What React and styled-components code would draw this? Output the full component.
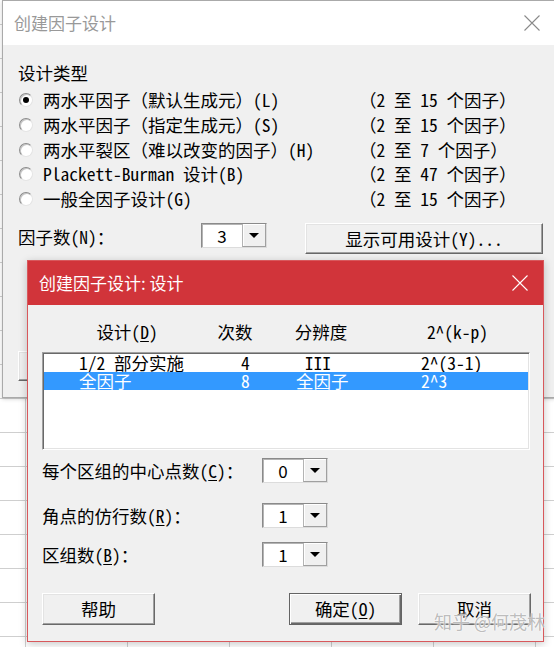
import React from "react";
import styled, { createGlobalStyle, css } from "styled-components";

const BODY_FONT = `"Noto Sans Mono CJK SC", "Noto Sans CJK SC", "DejaVu Sans Mono", monospace`;
const UI_FONT = `"Noto Sans CJK SC", "Noto Sans", sans-serif`;

const designTypes = [
  { label: "两水平因子（默认生成元）(L)", range: "（2 至 15 个因子）", checked: true },
  { label: "两水平因子（指定生成元）(S)", range: "（2 至 15 个因子）" },
  { label: "两水平裂区（难以改变的因子）(H)", range: "（2 至 7 个因子）" },
  { label: "Plackett-Burman 设计(B)", range: "（2 至 47 个因子）" },
  { label: "一般全因子设计(G)", range: "（2 至 15 个因子）" },
];

const designs = [
  { name: "1/2 部分实施", runs: "4", res: " III", exp: "2^(3-1)" },
  { name: "全因子", runs: "8", res: "全因子", exp: "2^3", selected: true },
];

const SHEET_COLS = 7;
const SHEET_ROWS = 19;

function CloseIcon({ color }) {
  return (
    <svg width="16" height="16" viewBox="0 0 16 16">
      <path d="M0.5 0.5 L15.5 15.5 M15.5 0.5 L0.5 15.5" stroke={color} strokeWidth="1.1" fill="none" />
    </svg>
  );
}

function Combo({ value }) {
  return (
    <ComboBox>
      <ComboValue>{value}</ComboValue>
      <ComboArrow>
        <Triangle />
      </ComboArrow>
    </ComboBox>
  );
}

function Hotkey({ children }) {
  return <Key>{children}</Key>;
}

export default function App() {
  return (
    <>
      <GlobalStyle />
      <Desktop>
        <Worksheet>
          {Array.from({ length: SHEET_COLS * SHEET_ROWS }).map((_, i) => (
            <SheetCell key={i} />
          ))}
        </Worksheet>

        <MainWindow>
          <TitleBar>
            <Title>创建因子设计</Title>
            <CloseButton>
              <CloseIcon color="#8a8a8a" />
            </CloseButton>
          </TitleBar>
          <MainBody>
            <SectionLabel>设计类型</SectionLabel>
            <RadioList>
              {designTypes.map((t) => (
                <RadioRow key={t.label}>
                  <RadioCircle $checked={t.checked} />
                  <span>{t.label}</span>
                  <span>{t.range}</span>
                </RadioRow>
              ))}
            </RadioList>
            <FactorRow>
              <FactorLabel>因子数(N)：</FactorLabel>
              <Combo value="3" />
              <Button $w={238} $h={31} $ml={38}>
                显示可用设计(Y)...
              </Button>
            </FactorRow>
            <HiddenButtons>
              <Button $w={113} $h={30}>帮助</Button>
            </HiddenButtons>
          </MainBody>
        </MainWindow>

        <DesignWindow>
          <TitleBar $active>
            <Title $active>创建因子设计: 设计</Title>
            <CloseButton>
              <CloseIcon color="#ffffff" />
            </CloseButton>
          </TitleBar>
          <DesignBody>
            <ListHeader>
              <span>
                设计(<Hotkey>D</Hotkey>)
              </span>
              <span>次数</span>
              <span>分辨度</span>
              <span>2^(k-p)</span>
            </ListHeader>
            <ListBox>
              {designs.map((d) => (
                <ListRow key={d.name} $selected={d.selected}>
                  <span>{d.name}</span>
                  <span>{d.runs}</span>
                  <span>{d.res}</span>
                  <span>{d.exp}</span>
                </ListRow>
              ))}
            </ListBox>
            <FormRow $mt={8}>
              <FormLabel>
                每个区组的中心点数(<Hotkey>C</Hotkey>)：
              </FormLabel>
              <Combo value="0" />
            </FormRow>
            <FormRow $mt={20}>
              <FormLabel>
                角点的仿行数(<Hotkey>R</Hotkey>)：
              </FormLabel>
              <Combo value="1" />
            </FormRow>
            <FormRow $mt={14}>
              <FormLabel>
                区组数(<Hotkey>B</Hotkey>)：
              </FormLabel>
              <Combo value="1" />
            </FormRow>
            <ButtonBar>
              <Button>帮助</Button>
              <ButtonGroup>
                <Button $default>
                  确定(<Hotkey>O</Hotkey>)
                </Button>
                <Button>取消</Button>
              </ButtonGroup>
            </ButtonBar>
          </DesignBody>
        </DesignWindow>

        <Watermark>知乎 @何茂林</Watermark>
      </Desktop>
    </>
  );
}

/*
  Styles
*/

const GlobalStyle = createGlobalStyle`
  html, body {
    margin: 0;
    padding: 0;
    background: #fff;
    overflow: hidden;
  }
`;

const Desktop = styled.div`
  position: relative;
  width: 554px;
  height: 647px;
  overflow: hidden;
  background: #fff;
`;

const Worksheet = styled.div`
  display: grid;
  grid-template-columns: 26px repeat(6, 102px);
  grid-auto-rows: 34px;
  padding-top: 24px;
`;

const SheetCell = styled.div`
  box-sizing: border-box;
  border-top: 1px solid #cfcfcf;
  border-right: 1px solid #cfcfcf;
`;

const Window = styled.div`
  position: absolute;
  box-sizing: border-box;
  display: flex;
  flex-direction: column;
  background: #f0f0f0;
`;

const MainWindow = styled(Window)`
  left: 2px;
  top: 0;
  width: 554px;
  height: 398px;
  border: 1px solid #aaaaaa;
  box-shadow: 0 1px 4px rgba(0, 0, 0, 0.18);
`;

const DesignWindow = styled(Window)`
  left: 27px;
  top: 260px;
  width: 517px;
  height: 382px;
  border: 1px solid #d8585c;
  box-shadow: 0 2px 8px rgba(0, 0, 0, 0.22);
`;

const TitleBar = styled.div`
  display: flex;
  align-items: center;
  justify-content: space-between;
  height: 44px;
  flex-shrink: 0;
  background: ${({ $active }) => ($active ? "#d1343a" : "#ffffff")};
`;

const Title = styled.div`
  padding-left: 11px;
  font-family: ${UI_FONT};
  font-size: 17px;
  line-height: 24px;
  color: ${({ $active }) => ($active ? "#ffffff" : "#999999")};
`;

const CloseButton = styled.div`
  display: flex;
  align-items: center;
  justify-content: center;
  width: 46px;
  height: 44px;
`;

const MainBody = styled.div`
  display: flex;
  flex-direction: column;
  padding: 0 0 0 15px;
  font-family: ${BODY_FONT};
  font-size: 17.5px;
  color: #000;
`;

const SectionLabel = styled.div`
  margin-top: 16px;
  line-height: 24px;
`;

const RadioList = styled.div`
  display: flex;
  flex-direction: column;
  margin-top: 3px;
`;

const RadioRow = styled.div`
  display: grid;
  grid-template-columns: 25px 316px auto;
  align-items: center;
  height: 24.7px;
  line-height: 24px;
  white-space: pre;
`;

const RadioCircle = styled.span`
  box-sizing: border-box;
  display: flex;
  align-items: center;
  justify-content: center;
  width: 14px;
  height: 14px;
  margin-left: 1px;
  border-radius: 50%;
  background: #fff;
  border: 1px solid;
  border-color: #8c8c8c #e4e4e4 #e4e4e4 #8c8c8c;
  box-shadow: inset 1px 1px 0 #c4c4c4;

  &::after {
    content: "";
    width: 6px;
    height: 6px;
    border-radius: 50%;
    background: ${({ $checked }) => ($checked ? "#000" : "transparent")};
  }
`;

const FactorRow = styled.div`
  display: flex;
  align-items: flex-start;
  margin-top: 12px;
`;

const FactorLabel = styled.div`
  width: 183px;
  line-height: 28px;
`;

const HiddenButtons = styled.div`
  display: flex;
  margin-top: 97px;
`;

const ComboBox = styled.div`
  box-sizing: border-box;
  display: flex;
  width: 66px;
  height: 25px;
  background: #fff;
  border: 1px solid;
  border-color: #8a8a8a #dcdcdc #dcdcdc #8a8a8a;
  box-shadow: inset 1px 1px 0 #b4b4b4;
`;

const ComboValue = styled.div`
  flex: 1;
  text-align: center;
  font-family: ${UI_FONT};
  font-size: 17px;
  line-height: 23px;
  color: #000;
`;

const ComboArrow = styled.div`
  box-sizing: border-box;
  display: flex;
  align-items: center;
  justify-content: center;
  width: 24px;
  height: 100%;
  background: #f0f0f0;
  border-left: 1px solid #b4b4b4;
  border-bottom: 1px solid #a0a0a0;
  border-right: 1px solid #a0a0a0;
  box-shadow: inset 1px 1px 0 #fff;
`;

const Triangle = styled.span`
  width: 0;
  height: 0;
  border-left: 5px solid transparent;
  border-right: 5px solid transparent;
  border-top: 5px solid #000;
`;

const Button = styled.button`
  box-sizing: border-box;
  width: ${({ $w }) => $w || 113}px;
  height: ${({ $h }) => $h || 32}px;
  margin-left: ${({ $ml }) => $ml || 0}px;
  padding: 0;
  background: #f0f0f0;
  font-family: ${BODY_FONT};
  font-size: 17.5px;
  line-height: 20px;
  color: #000;
  border: 1px solid;
  border-color: #ffffff #696969 #696969 #ffffff;
  box-shadow: inset -1px -1px 0 #a0a0a0, inset 1px 1px 0 #e3e3e3;

  ${({ $default }) =>
    $default &&
    css`
      border-color: #646464;
      box-shadow: inset 1px 1px 0 #ffffff, inset -1px -1px 0 #696969,
        inset -2px -2px 0 #a0a0a0;
    `}
`;

const DesignBody = styled.div`
  display: flex;
  flex-direction: column;
  padding: 0 12px 0 14px;
  font-family: ${BODY_FONT};
  font-size: 17.5px;
  color: #000;
`;

const ListHeader = styled.div`
  display: grid;
  grid-template-columns: 170px 46px 126px 1fr;
  margin-top: 15px;
  line-height: 24px;
  text-align: center;
  white-space: pre;
`;

const ListBox = styled.div`
  box-sizing: border-box;
  display: flex;
  flex-direction: column;
  width: 488px;
  height: 98px;
  margin-top: 8px;
  background: #fff;
  border: 1px solid;
  border-color: #a0a0a0 #ffffff #ffffff #a0a0a0;
  box-shadow: inset 1px 1px 0 #696969, inset -1px -1px 0 #e3e3e3;
  padding: 1px 1px 0 1px;
`;

const ListRow = styled.div`
  display: grid;
  grid-template-columns: 162px 55px 125px 1fr;
  height: 18px;
  padding-left: 35px;
  line-height: 18px;
  white-space: pre;
  background: ${({ $selected }) => ($selected ? "#3399ff" : "transparent")};
  color: ${({ $selected }) => ($selected ? "#ffffff" : "#000000")};
`;

const FormRow = styled.div`
  display: flex;
  align-items: center;
  margin-top: ${({ $mt }) => $mt}px;
`;

const FormLabel = styled.div`
  width: 220px;
  line-height: 25px;
`;

const Key = styled.span`
  text-decoration: underline;
  text-underline-offset: 2px;
`;

const ButtonBar = styled.div`
  display: flex;
  justify-content: space-between;
  margin-top: 26px;
`;

const ButtonGroup = styled.div`
  display: flex;
  gap: 16px;
`;

const Watermark = styled.div`
  position: absolute;
  left: 434px;
  top: 609px;
  font-family: ${UI_FONT};
  font-size: 18px;
  line-height: 24px;
  color: rgba(150, 150, 150, 0.65);
  text-shadow: 0 0 1px #fff, 0 0 2px #fff;
  pointer-events: none;
`;
